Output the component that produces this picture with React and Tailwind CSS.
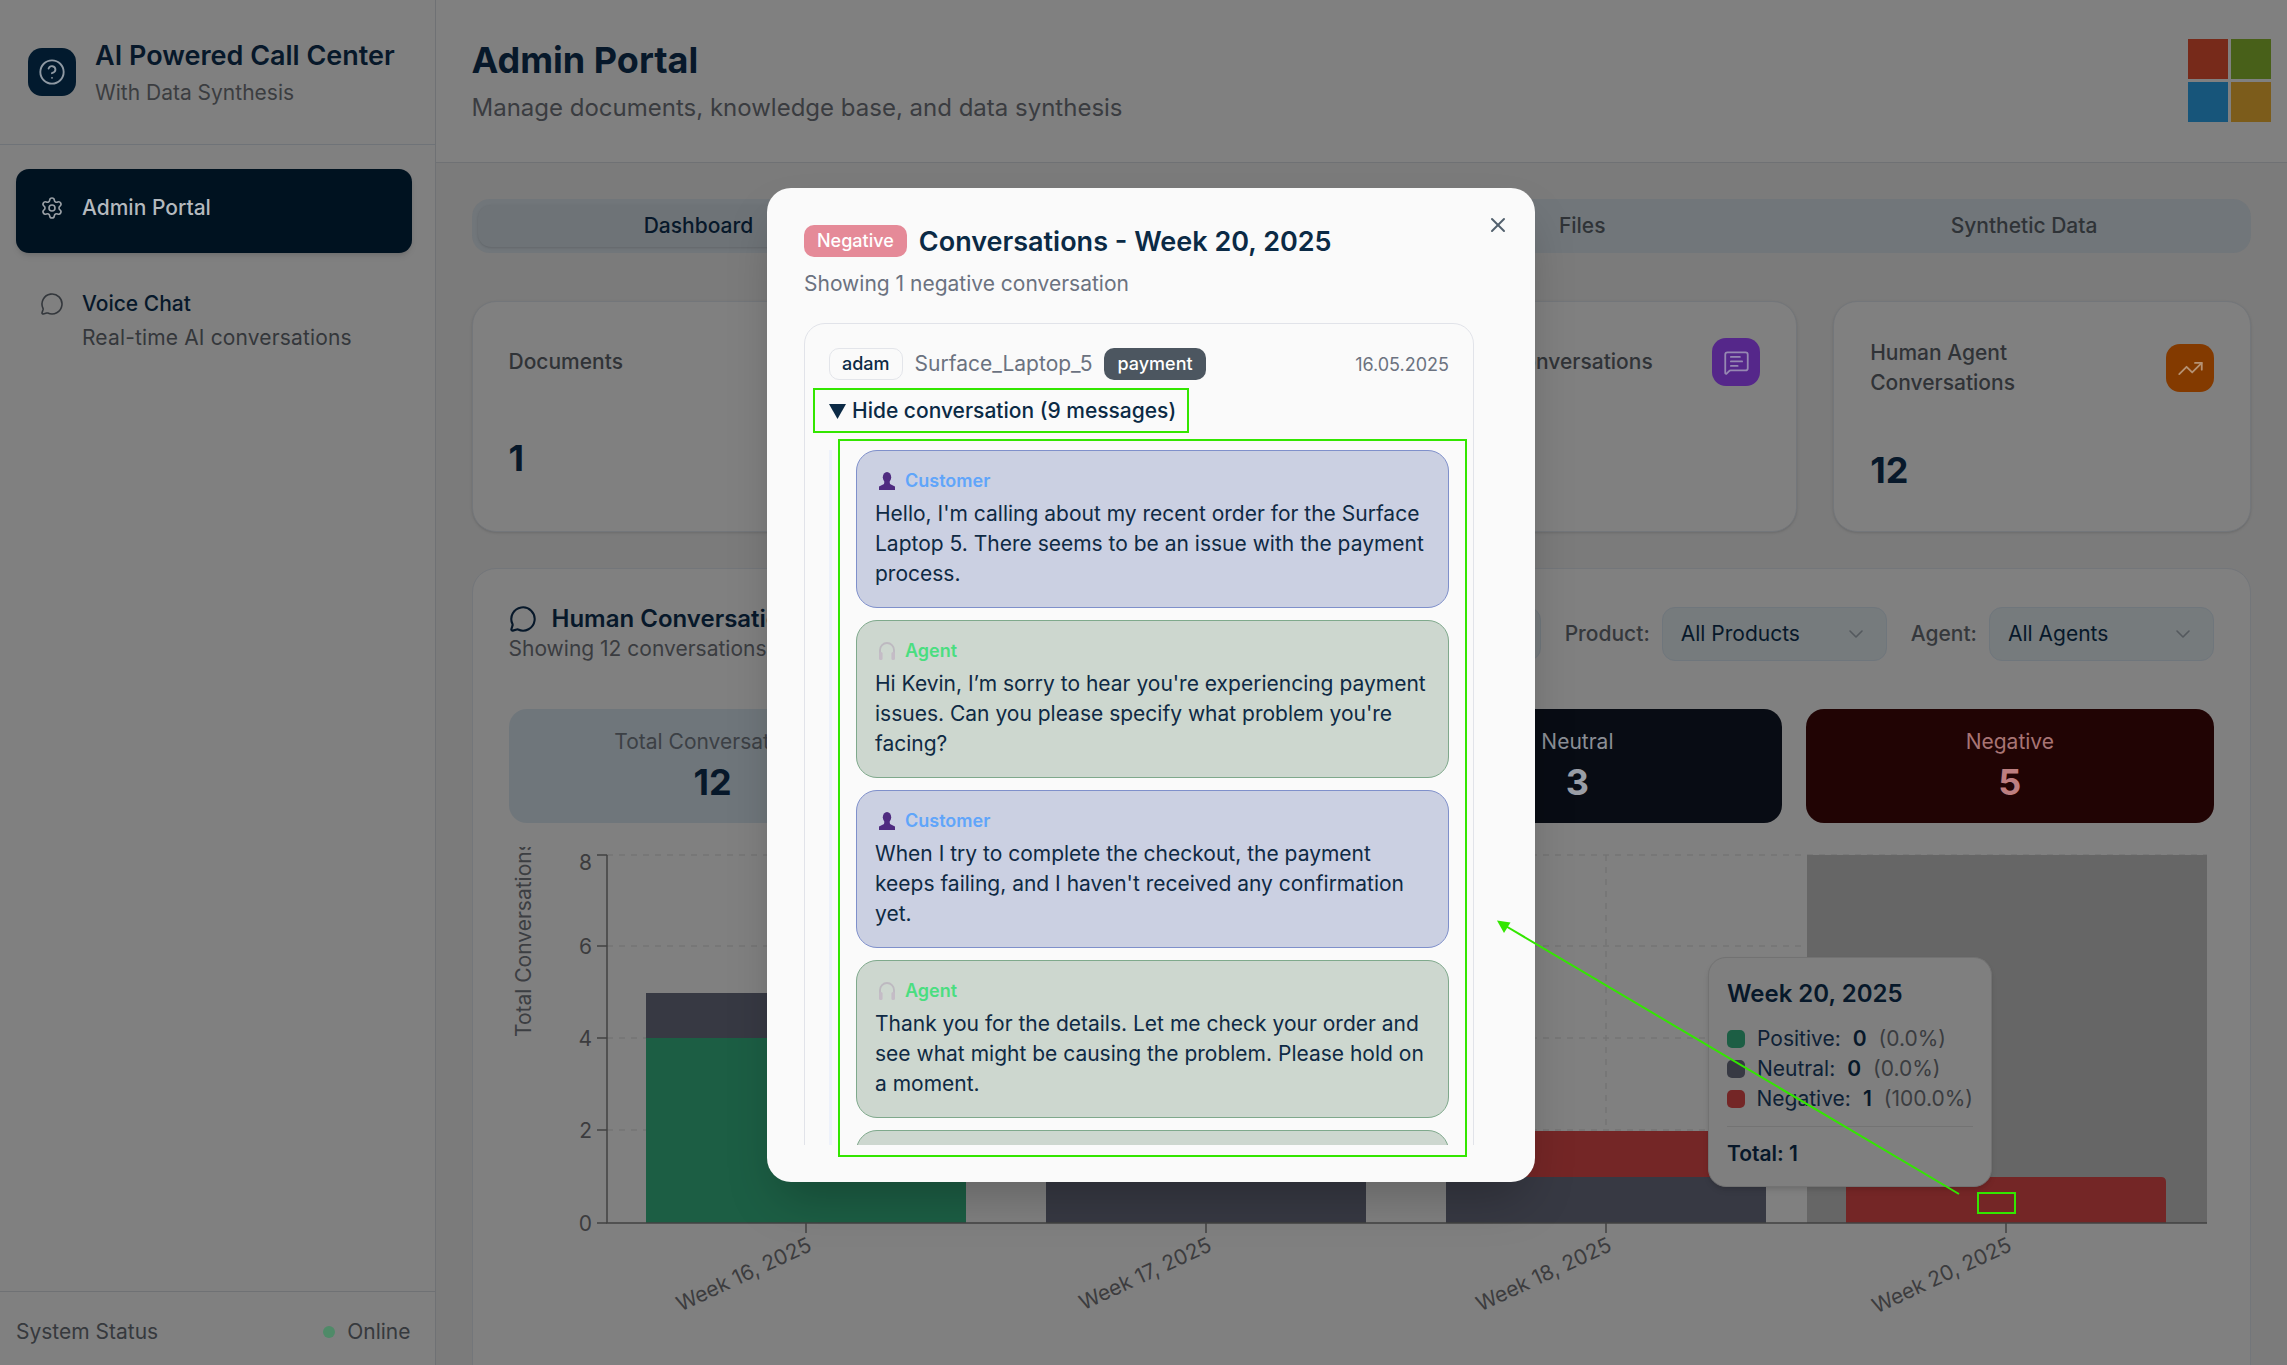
import React from 'react';
import { Settings, MessageCircle, CircleHelp, MessageSquareText, TrendingUp, ChevronDown, X } from 'lucide-react';

const TABS = ['Dashboard', '', 'Files', 'Synthetic Data'];

const MESSAGES = [
  { role: 'Customer', text: "Hello, I'm calling about my recent order for the Surface Laptop 5. There seems to be an issue with the payment process." },
  { role: 'Agent', text: "Hi Kevin, I’m sorry to hear you're experiencing payment issues. Can you please specify what problem you're facing?" },
  { role: 'Customer', text: "When I try to complete the checkout, the payment keeps failing, and I haven't received any confirmation yet." },
  { role: 'Agent', text: 'Thank you for the details. Let me check your order and see what might be causing the problem. Please hold on a moment.' },
  { role: 'Agent', text: '' },
];

// --- Emoji style role icons ---
const PersonIcon = () => (
  <svg className="w-[18px] h-[18px] ml-[3px] shrink-0" viewBox="0 0 18 18">
    <ellipse cx="9" cy="5.200" rx="4.200" ry="5.200" fill="#4f2b80" />
    <path d="M6.500 9h5l.5 3 5 2.500V18H1v-3.500L6 12z" fill="#4f2b80" />
  </svg>
);

const HeadsetIcon = () => (
  <svg className="w-[18px] h-[18px] ml-[3px] shrink-0" viewBox="0 0 18 18" fill="none">
    <path d="M2 12V8a7 7 0 0114 0v4" stroke="#bdb9c0" strokeWidth="1.8" />
    <rect x="1" y="10" width="3.600" height="8" rx="1.600" fill="#c4bcc6" />
    <rect x="13.400" y="10" width="3.600" height="8" rx="1.600" fill="#c4bcc6" />
  </svg>
);

const Message = ({ role, text }) => {
  const isAgent = role === 'Agent';
  return (
    <div className={`shrink-0 rounded-[21px] border-[1.5px] px-[18px] pt-[16px] pb-[18px] h-[158px] ${isAgent ? 'bg-[#cdd7cf] border-[#7fa98c]' : 'bg-[#cbd0e2] border-[#7f90cb]'}`}>
      <div className="flex items-center gap-[9px] h-[27px] mb-[5px]">
        {isAgent ? <HeadsetIcon /> : <PersonIcon />}
        <span className={`text-[18px] font-semibold ${isAgent ? 'text-[#4ade80]' : 'text-[#60a5fa]'}`}>{role}</span>
      </div>
      <p className="text-[21px] leading-[30px] text-[#0f2a44]">{text}</p>
    </div>
  );
};

const Sidebar = () => (
  <aside className="w-[435.5px] shrink-0 h-full flex flex-col bg-[#808080] border-r-[1.5px] border-[#6f7174]">
    <div className="h-[144.5px] shrink-0 flex items-center gap-[19px] pl-[28px] border-b-[1.5px] border-[#6f7378]">
      <div className="w-[48px] h-[48px] rounded-[14px] bg-[#021a2e] flex items-center justify-center">
        <CircleHelp className="w-[28px] h-[28px] text-[#8f99a3]" strokeWidth={1.6} />
      </div>
      <div className="mt-[3px]">
        <div className="text-[27px] leading-[36px] font-semibold text-[#07182a]">AI Powered Call Center</div>
        <div className="text-[21px] leading-[30px] mt-[4px] text-[#3b3d40]">With Data Synthesis</div>
      </div>
    </div>
    <nav className="flex-1 pl-[16px] pr-[23px] pt-[24px] flex flex-col gap-[12px]">
      <div className="h-[84px] rounded-[13px] bg-[#001220] flex items-start gap-[18px] pl-[24px] pt-[24px] shadow-md">
        <Settings className="w-[24px] h-[24px] mt-[3px] text-[#9aa0a6]" strokeWidth={1.6} />
        <span className="text-[21px] leading-[30px] font-medium text-[#b4b9be]">Admin Portal</span>
      </div>
      <div className="h-[84px] rounded-[13px] flex items-start gap-[18px] pl-[24px] pt-[24px]">
        <MessageCircle className="w-[24px] h-[24px] mt-[3px] text-[#33373c]" strokeWidth={1.6} />
        <div>
          <div className="text-[21px] leading-[30px] font-medium text-[#07182a]">Voice Chat</div>
          <div className="text-[21px] leading-[30px] mt-[4px] tracking-[0.15px] text-[#34373b]">Real-time AI conversations</div>
        </div>
      </div>
    </nav>
    <div className="h-[74px] shrink-0 border-t-[1.5px] border-[#6f7174] flex items-center justify-between px-[16px] pt-[6px] pr-[24px] text-[21px] text-[#36393d]">
      <span>System Status</span>
      <span className="flex items-center gap-[12px]">
        <span className="w-[12px] h-[12px] rounded-full bg-[#4f8a68]" />
        Online
      </span>
    </div>
  </aside>
);

const StatCard = ({ label, value, icon, iconBg }) => (
  <div className="rounded-[24px] border-[1.5px] border-[#73767a] bg-[#808080] px-[36px] pt-[36px] h-[231px] shadow-sm">
    <div className="flex items-center justify-between min-h-[48px]">
      <div className="text-[21px] leading-[30px] font-medium text-[#303337]">{label}</div>
      {icon && <div className={`w-[48px] h-[48px] shrink-0 rounded-[14px] flex items-center justify-center ${iconBg}`}>{icon}</div>}
    </div>
    {value && <div className="text-[36px] leading-[40px] font-bold text-[#07182a] mt-[52px]">{value}</div>}
  </div>
);

const Select = ({ label, value }) => (
  <div className="flex items-center gap-[12px]">
    {label && <span className="text-[21px] font-medium text-[#35383c]">{label}</span>}
    <div className="w-[225px] h-[54px] rounded-[13px] border-[1.5px] border-[#6f767c] bg-[#767b7d] flex items-center justify-between px-[18px] text-[21px] text-[#07182a]">
      {value}
      <ChevronDown className="w-[24px] h-[24px] text-[#54595e]" strokeWidth={1.6} />
    </div>
  </div>
);

const Tile = ({ label, value, bg, labelColor, valueColor }) => (
  <div className={`h-[114px] rounded-[18px] flex flex-col items-center pt-[18px] ${bg}`}>
    <div className={`text-[21px] leading-[30px] ${labelColor}`}>{label}</div>
    <div className={`text-[36px] leading-[48px] font-bold mt-[1px] ${valueColor}`}>{value}</div>
  </div>
);

// chart values are page pixels: one conversation is 46px, the baseline sits at y 1223
const BARS = [
  { x: 646, label: 'Week 16, 2025', tick: 806, parts: [['#1c5e44', 1038, 1223], ['#373943', 993, 1038]] },
  { x: 1046, label: 'Week 17, 2025', tick: 1206, parts: [['#373943', 1131, 1223], ['#742626', 1039, 1131]] },
  { x: 1446, label: 'Week 18, 2025', tick: 1606, parts: [['#373943', 1177, 1223], ['#742626', 1131, 1177]] },
  { x: 1846, label: 'Week 20, 2025', tick: 2006, parts: [['#742626', 1177, 1223]] },
];
const Y_TICKS = [[8, 855], [6, 946], [4, 1038], [2, 1130], [0, 1223]];

const Chart = () => (
  <svg className="block mt-[22px] overflow-visible" width="1705" height="520" style={{ fontFamily: 'Inter, sans-serif' }}>
    <defs>
      <clipPath id="ylabel"><rect x="509" y="847" width="40" height="300" /></clipPath>
    </defs>
    <g transform="translate(-509,-845)">
      {Y_TICKS.slice(0, 4).map(([v, y]) => (
        <line key={v} x1="607" x2="2207" y1={y} y2={y} stroke="#747474" strokeWidth="1.5" strokeDasharray="6 6" />
      ))}
      {BARS.map(b => (
        <line key={b.tick} x1={b.tick} x2={b.tick} y1="855" y2="1223" stroke="#747474" strokeWidth="1.5" strokeDasharray="6 6" />
      ))}
      <rect x="1807" y="855" width="400" height="368" fill="#666666" />
      {BARS.map(b => b.parts.map(([fill, y1, y2]) => (
        fill === '#742626'
          ? <path key={fill + y1} d={`M${b.x} ${y2}V${y1 + 5}q0-5 5-5H${b.x + 315}q5 0 5 5V${y2}z`} fill={fill} />
          : <rect key={fill + y1} x={b.x} y={y1} width="320" height={y2 - y1} fill={fill} />
      )))}
      <path d="M607 855V1223H2207" fill="none" stroke="#424242" strokeWidth="1.5" />
      {Y_TICKS.map(([v, y]) => (
        <g key={v}>
          <line x1="597" x2="607" y1={y} y2={y} stroke="#424242" strokeWidth="1.5" />
          <text x="592" y={v === 8 ? y + 15 : y + 8} textAnchor="end" fontSize="21" fill="#3c3c3e">{v}</text>
        </g>
      ))}
      {BARS.map(b => (
        <g key={b.label}>
          <line x1={b.tick} x2={b.tick} y1="1223" y2="1233" stroke="#424242" strokeWidth="1.5" />
          <text transform={`translate(${b.tick + 7} 1250) rotate(-25)`} textAnchor="end" fontSize="21" fill="#3c3c3e">{b.label}</text>
        </g>
      ))}
      <g clipPath="url(#ylabel)">
        <text transform="translate(531 1037) rotate(-90)" fontSize="21" fill="#3c3e42">Total Conversations</text>
      </g>
    </g>
  </svg>
);

const TooltipRow = ({ color, name, value, pct }) => (
  <div className="flex items-center h-[30px] text-[21px]">
    <span className={`w-[18px] h-[18px] rounded-[5px] mr-[12px] ${color}`} />
    <span className="text-[#0e2136]">{name}</span>
    <span className="ml-[12px] font-semibold text-[#07182a]">{value}</span>
    <span className="ml-[12px] text-[#3a3c40]">{pct}</span>
  </div>
);

const Tooltip = () => (
  <div className="absolute left-[1708px] top-[957px] w-[284px] h-[230px] rounded-[18px] border-[1.5px] border-[#727272] bg-[#7f7f7f] px-[18px] pt-[18px] shadow-md">
    <div className="text-[24px] leading-[36px] font-semibold text-[#07182a] mb-[12px]">Week 20, 2025</div>
    <TooltipRow color="bg-[#1c5e44]" name="Positive:" value="0" pct="(0.0%)" />
    <TooltipRow color="bg-[#373943]" name="Neutral:" value="0" pct="(0.0%)" />
    <TooltipRow color="bg-[#742626]" name="Negative:" value="1" pct="(100.0%)" />
    <div className="border-t-[1.5px] border-[#737373] mt-[12px] pt-[12px] text-[21px] leading-[30px] font-semibold text-[#07182a]">Total: 1</div>
  </div>
);

const Modal = () => (
  <div className="absolute left-[767px] top-[188px] w-[768px] h-[994px] rounded-[24px] bg-[#fafafa] shadow-2xl pl-[37px] pr-[61px] pt-[37px] pb-[37px] flex flex-col">
    <X className="absolute right-[25px] top-[25px] w-[24px] h-[24px] text-[#52606d]" strokeWidth={2} />
    <div className="flex items-center gap-[12px] h-[32px]">
      <span className="h-[32px] px-[13px] rounded-[10px] bg-[#e58a98] text-white text-[18px] font-medium leading-[32px]">Negative</span>
      <h2 className="text-[27px] leading-[34px] mt-[1px] font-semibold text-[#0b2a45] whitespace-nowrap">Conversations - Week 20, 2025</h2>
    </div>
    <p className="text-[21px] leading-[30px] mt-[12px] text-[#6b7280]">Showing 1 negative conversation</p>
    <div className="flex-1 min-h-0 overflow-hidden mt-[24px]">
      <div className="rounded-[21px] border-[1.5px] border-[#e1e3e9] px-[24px] pt-[24px] h-[1200px]">
        <div className="flex items-center gap-[12px] h-[32px]">
          <span className="h-[32px] px-[12px] rounded-[10px] border-[1.5px] border-[#e3e5ea] text-[18px] font-medium leading-[29px] text-[#0b2a45]">adam</span>
          <span className="text-[21px] text-[#6b7280]">Surface_Laptop_5</span>
          <span className="h-[32px] px-[13px] rounded-[10px] bg-[#4c5660] text-white text-[18px] font-medium leading-[32px]">payment</span>
          <span className="ml-auto text-[18px] text-[#6b7280]">16.05.2025</span>
        </div>
        <div className="flex items-center gap-[6px] h-[30px] mt-[16px] text-[21px] font-medium text-[#0b2a45]">
          <svg className="w-[17px] h-[15px]" viewBox="0 0 17 15"><path d="M0 0h17L8.5 15z" fill="#0b2a45" /></svg>
          Hide conversation (9 messages)
        </div>
        <div className="mt-[24px] border-l-[3px] border-[#eef2fb] pl-[24px] flex flex-col gap-[12px]">
          {MESSAGES.map((m, i) => <Message key={i} {...m} />)}
        </div>
      </div>
    </div>
  </div>
);

const Annotations = () => (
  <>
    <div className="absolute left-[813px] top-[388px] w-[376px] h-[45px] border-[2px] border-[#33e600]" />
    <div className="absolute left-[838px] top-[439px] w-[629px] h-[718px] border-[2px] border-[#33e600]" />
    <div className="absolute left-[1977px] top-[1192px] w-[39px] h-[22px] border-[2px] border-[#33e600]" />
    <svg className="absolute inset-0 pointer-events-none" width="2287" height="1365">
      <line x1="1959" y1="1194" x2="1504" y2="925" stroke="#33e600" strokeWidth="2" />
      <path d="M1497 920.5l13.5 2-6.500 10.500z" fill="#33e600" />
    </svg>
  </>
);

export default function App() {
  return (
    <div className="relative w-[2287px] h-[1365px] overflow-hidden flex bg-[#7b7b7b] font-['Inter',sans-serif]">
      <Sidebar />
      <div className="flex-1 min-w-0 flex flex-col">
        <header className="h-[163px] shrink-0 bg-[#808080] border-b-[1.5px] border-[#6f7174] flex items-center justify-between pl-[36px] pr-[16px]">
          <div>
            <h1 className="text-[36px] leading-[48px] font-bold text-[#07182a]">Admin Portal</h1>
            <p className="text-[24px] leading-[36px] mt-[6px] text-[#3a3c40]">Manage documents, knowledge base, and data synthesis</p>
          </div>
          <div className="grid grid-cols-2 gap-[3px] w-[83px] -mt-[2px]">
            <div className="h-[40px] bg-[#772a1a]" />
            <div className="h-[40px] bg-[#486019]" />
            <div className="h-[40px] bg-[#17557a]" />
            <div className="h-[40px] bg-[#7c5c1b]" />
          </div>
        </header>
        <main className="flex-1 min-h-0 px-[36px] pt-[36px]">
          <div className="grid grid-cols-4 h-[54px] rounded-[18px] bg-[#71767a] p-[6px]">
            {TABS.map((t, i) => (
              <div key={i} className={`rounded-[13px] flex items-center justify-center text-[21px] font-medium text-[#2f3337] ${i === 0 ? 'bg-[#6e7377] shadow-sm text-[#07182a]' : ''}`}>{t}</div>
            ))}
          </div>
          <div className="grid grid-cols-4 gap-[36px] mt-[48px]">
            <StatCard label="Documents" value="1" />
            <StatCard label="" />
            <StatCard label="AI Agent Conversations" iconBg="bg-[#55278a]" icon={<MessageSquareText className="w-[27px] h-[27px] text-[#9688b2]" strokeWidth={1.6} />} />
            <StatCard label={<>Human Agent<br />Conversations</>} value="12" iconBg="bg-[#833a00]" icon={<TrendingUp className="w-[27px] h-[27px] text-[#b59273]" strokeWidth={1.6} />} />
          </div>
          <section className="mt-[36px] h-[900px] rounded-[24px] border-[1.5px] border-[#73767a] bg-[#808080] px-[36px] pt-[38px]">
            <div className="h-[54px] flex justify-between">
              <div className="-mt-[3px]">
                <div className="flex items-center gap-[15px] h-[30px]">
                  <MessageCircle className="w-[28px] h-[28px] text-[#07182a]" strokeWidth={1.8} />
                  <span className="text-[24px] font-semibold text-[#07182a] whitespace-nowrap">Human Conversations</span>
                </div>
                <div className="text-[21px] leading-[30px] text-[#3a3c40] whitespace-nowrap">Showing 12 conversations</div>
              </div>
              <div className="flex items-center gap-[24px]">
                <Select value="" />
                <Select label="Product:" value="All Products" />
                <Select label="Agent:" value="All Agents" />
              </div>
            </div>
            <div className="grid grid-cols-4 gap-[24px] mt-[48px]">
              <Tile label="Total Conversations" value="12" bg="bg-[#6f767b]" labelColor="text-[#3c4045]" valueColor="text-[#07182a]" />
              <Tile label="" value="" bg="bg-[#06251a]" />
              <Tile label="Neutral" value="3" bg="bg-[#080c14]" labelColor="text-[#8b8f96]" valueColor="text-[#9a9ea6]" />
              <Tile label="Negative" value="5" bg="bg-[#210404]" labelColor="text-[#a87474]" valueColor="text-[#bd7f80]" />
            </div>
            <Chart />
          </section>
        </main>
      </div>
      <Tooltip />
      <Modal />
      <Annotations />
    </div>
  );
}
